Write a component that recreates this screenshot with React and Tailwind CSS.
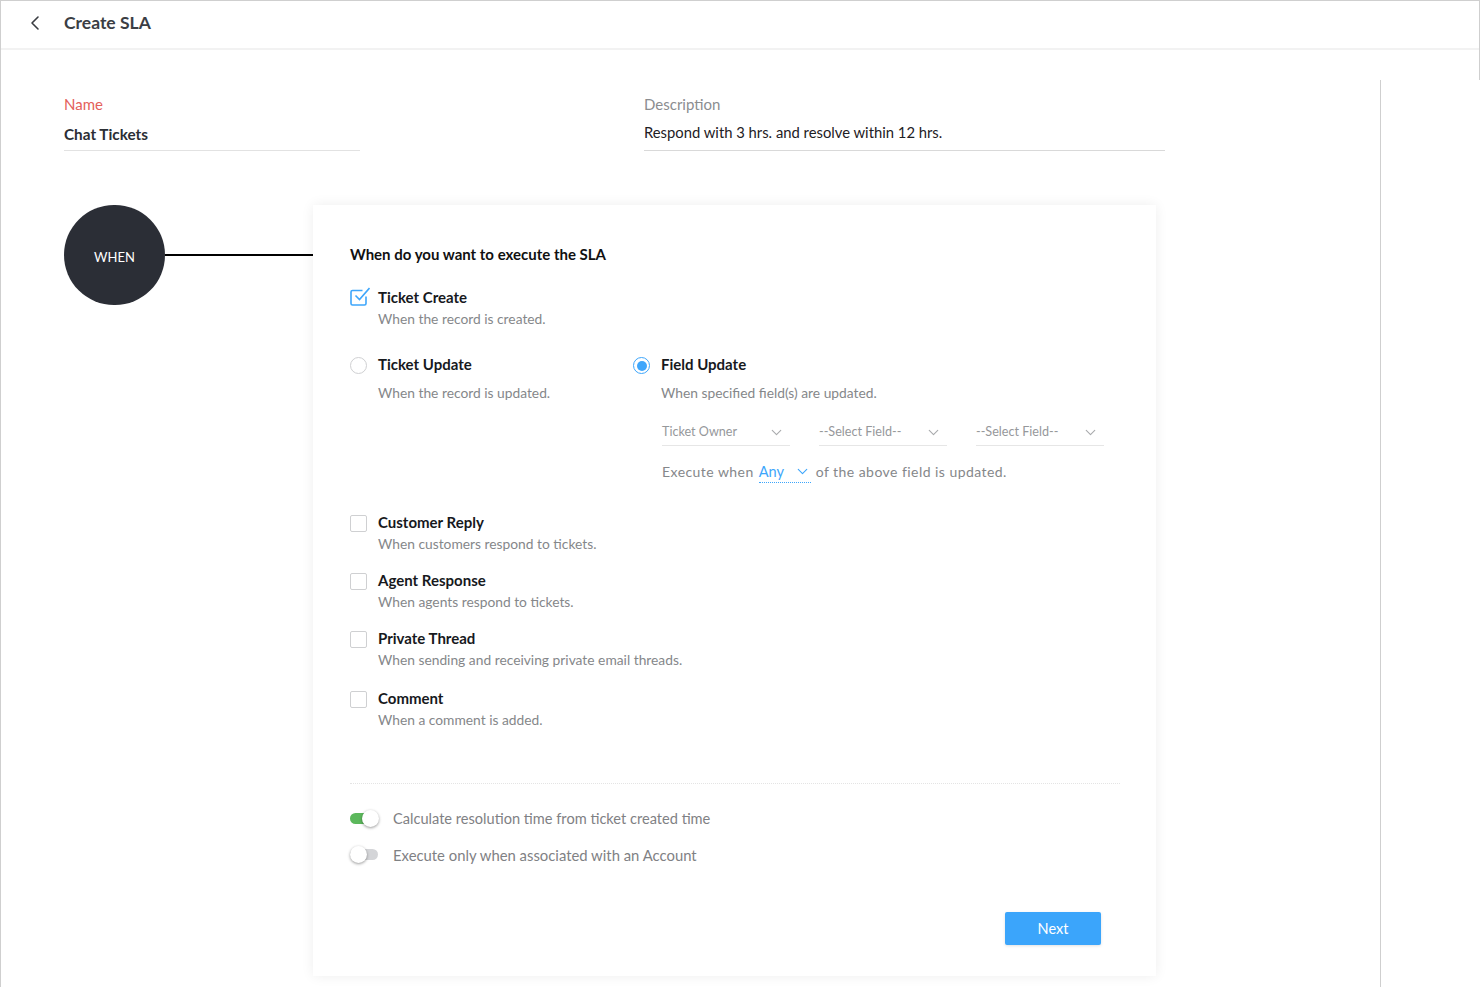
import { ChevronDown, ChevronLeft } from 'lucide-react';

const options = [
  { title: 'Customer Reply', desc: 'When customers respond to tickets.', cls: 'mt-[31px]' },
  { title: 'Agent Response', desc: 'When agents respond to tickets.', cls: 'mt-[16px]' },
  { title: 'Private Thread', desc: 'When sending and receiving private email threads.', cls: 'mt-[16px]' },
  { title: 'Comment', desc: 'When a comment is added.', cls: 'mt-[18px]' },
];

function OptionText({ title, desc, gap = 'mt-[2px]' }) {
  return (
    <div>
      <div className="text-[15px] leading-[20px] font-bold text-[#17191d]">{title}</div>
      <div className={`${gap} text-[13.8px] leading-[20px] text-[#85878a]`}>{desc}</div>
    </div>
  );
}

function SelectField({ label }) {
  return (
    <div className="flex h-[30px] w-[128px] items-center justify-between border-b border-[#e6e6e6] pt-[3px] text-[12.6px] text-[#96989b]">
      <span>{label}</span>
      <ChevronDown className="mr-[5px] mt-[1px] text-[#a9abad]" size={17} strokeWidth={1.6} />
    </div>
  );
}

function Toggle({ on }) {
  return (
    <div className="relative h-[18px] w-[28px]">
      <div className={`absolute left-0 top-[3px] h-[11px] w-[28px] rounded-full ${on ? 'bg-[#5cb85c]' : 'bg-[#d4d5d8]'}`} />
      <div className={`absolute top-0 h-[17px] w-[17px] rounded-full bg-white shadow-[0_1px_3px_rgba(0,0,0,0.4)] ${on ? 'left-[12px]' : 'left-0'}`} />
    </div>
  );
}

export default function App() {
  return (
    <div className="h-[987px] w-[1480px] overflow-hidden bg-white font-['Lato','Liberation_Sans',sans-serif]">
      <div className="h-[80px] border-x border-t border-[#cfcfcf]">
        <header className="flex h-[49px] items-center border-b-2 border-[#f2f2f2] pb-[3px]">
          <ChevronLeft className="ml-[22px] text-[#3a3d42]" size={24} strokeWidth={1.6} />
          <h1 className="ml-[17px] text-[17.5px] font-bold text-[#3b3e44]">Create SLA</h1>
        </header>
      </div>

      <main className="h-[907px] w-[1381px] border-x border-[#cfcfcf] pl-[63px] pt-[14px]">
        <div className="flex">
          <div className="w-[296px]">
            <label className="block text-[15px] leading-[20px] text-[#e4605a]">Name</label>
            <div className="mt-[10px] h-[27px] border-b border-[#e2e2e2] text-[15.3px] font-bold leading-[20px] text-[#2b2e34]">Chat Tickets</div>
          </div>
          <div className="ml-[284px] w-[521px]">
            <label className="block text-[15px] leading-[20px] text-[#8b8d90]">Description</label>
            <div className="mt-[8px] h-[29px] border-b border-[#d9d9d9] text-[14.8px] leading-[20px] text-[#1e2024]">Respond with 3 hrs. and resolve within 12 hrs.</div>
          </div>
        </div>

        <div className="mt-[54px] flex">
          <div className="flex h-[100px] w-[101px] shrink-0 items-center justify-center rounded-full bg-[#2b2e36] pt-[6px] text-[13px] text-white">WHEN</div>
          <div className="mt-[49px] h-[2px] w-[148px] bg-black" />

          <section className="h-[771px] w-[843px] bg-white pl-[37px] pr-[36px] pt-[39px] shadow-[0_0_12px_rgba(0,0,0,0.07)]">
            <h2 className="text-[15px] font-bold leading-[20px] text-[#111]">When do you want to execute the SLA</h2>

            <div className="mt-[23px] flex">
              <svg className="h-[20px] w-[20px] shrink-0" viewBox="0 0 20 20" fill="none" stroke="#3ea6fb" strokeWidth="1.6">
                <path d="M16 9.5v7a1.5 1.5 0 0 1-1.5 1.5H2.5A1.5 1.5 0 0 1 1 16.5V5a1.5 1.5 0 0 1 1.5-1.5h10" />
                <path d="M5.5 8.5l4 4L19.5 1" />
              </svg>
              <div className="ml-[8px]">
                <OptionText title="Ticket Create" desc="When the record is created." />
              </div>
            </div>

            <div className="mt-[25px] flex">
              <div className="flex w-[283px]">
                <div className="mt-[3px] h-[17px] w-[17px] shrink-0 rounded-full border-[1.5px] border-[#cfd0d2]" />
                <div className="ml-[11px]">
                  <OptionText title="Ticket Update" desc="When the record is updated." gap="mt-[9px]" />
                </div>
              </div>
              <div>
                <div className="flex">
                  <div className="mt-[3px] flex h-[17px] w-[17px] shrink-0 items-center justify-center rounded-full border-[1.5px] border-[#3ea6fb]">
                    <div className="h-[10px] w-[10px] rounded-full bg-[#3ea6fb]" />
                  </div>
                  <div className="ml-[11px]">
                    <OptionText title="Field Update" desc="When specified field(s) are updated." gap="mt-[9px]" />
                  </div>
                </div>
                <div className="ml-[29px] mt-[13px] flex gap-[29px]">
                  <SelectField label="Ticket Owner" />
                  <SelectField label="--Select Field--" />
                  <SelectField label="--Select Field--" />
                </div>
                <div className="ml-[29px] mt-[15px] flex h-[20px] items-center text-[14px] tracking-[0.45px] text-[#85878a]">
                  <span>Execute when</span>
                  <span className="ml-[5px] flex w-[52px] items-center justify-between border-b border-dotted border-[#3ea6fb] pt-[2px] text-[14.6px] tracking-normal text-[#3ea6fb]">
                    Any
                    <ChevronDown size={17} strokeWidth={1.6} />
                  </span>
                  <span className="ml-[5px]">of the above field is updated.</span>
                </div>
              </div>
            </div>

            {options.map(o => (
              <div key={o.title} className={`${o.cls} flex`}>
                <div className="mt-[3px] h-[17px] w-[17px] shrink-0 rounded-[2px] border-[1.5px] border-[#cfd0d2]" />
                <div className="ml-[11px]">
                  <OptionText title={o.title} desc={o.desc} />
                </div>
              </div>
            ))}

            <div className="mt-[53px] w-[770px] border-t border-dotted border-[#e4e4e4]" />

            <div className="mt-[26px] flex h-[18px] items-center">
              <Toggle on />
              <span className="ml-[15px] text-[14.6px] text-[#7f8184]">Calculate resolution time from ticket created time</span>
            </div>
            <div className="mt-[18px] flex h-[18px] items-center">
              <Toggle />
              <span className="ml-[15px] text-[14.85px] text-[#7f8184]">Execute only when associated with an Account</span>
            </div>

            <div className="mt-[48px] flex w-[751px] justify-end">
              <button className="h-[33px] w-[96px] rounded-[2px] bg-[#3ba5fb] text-[14.5px] text-white shadow-[0_1px_3px_rgba(0,0,0,0.12)]">Next</button>
            </div>
          </section>
        </div>
      </main>
    </div>
  );
}
